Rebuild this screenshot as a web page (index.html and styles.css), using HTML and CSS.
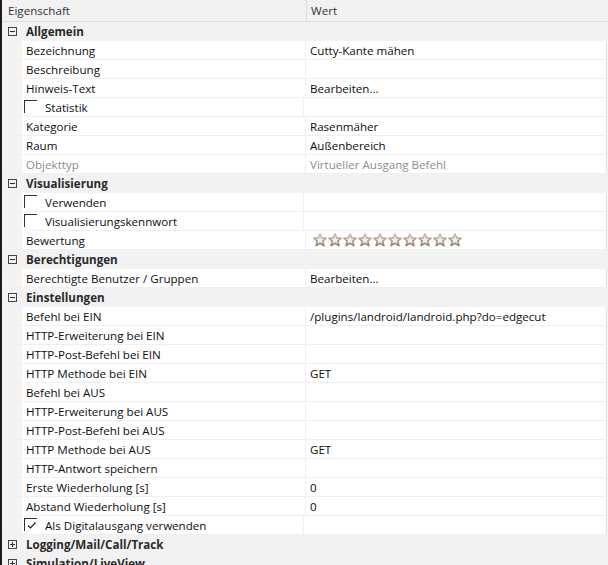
FILE: index.html
```html
<!DOCTYPE html>
<html lang="de">
<head>
<meta charset="utf-8">
<title>Eigenschaften</title>
<link rel="stylesheet" href="styles.css">
</head>
<body>
<div class="frame">
  <div class="head">
    <div class="hcell hname">Eigenschaft</div>
    <div class="hcell hval">Wert</div>
  </div>

  <div class="sec"><span class="tog minus"></span><span class="stitle">Allgemein</span></div>
  <div class="row"><div class="gut"></div><div class="name">Bezeichnung</div><div class="val">Cutty-Kante mähen</div></div>
  <div class="row"><div class="gut"></div><div class="name">Beschreibung</div><div class="val"></div></div>
  <div class="row"><div class="gut"></div><div class="name">Hinweis-Text</div><div class="val">Bearbeiten...</div></div>
  <div class="row"><div class="gut"></div><div class="name chk"><span class="box"></span>Statistik</div><div class="val"></div></div>
  <div class="row"><div class="gut"></div><div class="name">Kategorie</div><div class="val">Rasenmäher</div></div>
  <div class="row"><div class="gut"></div><div class="name">Raum</div><div class="val">Außenbereich</div></div>
  <div class="row dis"><div class="gut"></div><div class="name">Objekttyp</div><div class="val">Virtueller Ausgang Befehl</div></div>

  <div class="sec"><span class="tog minus"></span><span class="stitle">Visualisierung</span></div>
  <div class="row"><div class="gut"></div><div class="name chk"><span class="box"></span>Verwenden</div><div class="val"></div></div>
  <div class="row"><div class="gut"></div><div class="name chk"><span class="box"></span>Visualisierungskennwort</div><div class="val"></div></div>
  <div class="row"><div class="gut"></div><div class="name">Bewertung</div><div class="val stars">
    <svg width="150" height="14" viewBox="0 0 150 14">
      <defs>
        <linearGradient id="sg" x1="0" y1="0" x2="0" y2="1">
          <stop offset="0" stop-color="#cfc6b0"/>
          <stop offset="1" stop-color="#8c8270"/>
        </linearGradient>
        <polygon id="st" points="7,0.8 8.8,4.9 13.2,5.2 9.8,8.1 10.9,12.6 7,10.2 3.1,12.6 4.2,8.1 0.8,5.2 5.2,4.9" fill="#f2eee4" stroke="url(#sg)" stroke-width="1.6" stroke-linejoin="round"/>
      </defs>
      <use href="#st" x="0"/><use href="#st" x="15"/><use href="#st" x="30"/><use href="#st" x="45"/><use href="#st" x="60"/>
      <use href="#st" x="75"/><use href="#st" x="90"/><use href="#st" x="105"/><use href="#st" x="120"/><use href="#st" x="135"/>
    </svg>
  </div></div>

  <div class="sec"><span class="tog minus"></span><span class="stitle">Berechtigungen</span></div>
  <div class="row"><div class="gut"></div><div class="name">Berechtigte Benutzer / Gruppen</div><div class="val">Bearbeiten...</div></div>

  <div class="sec"><span class="tog minus"></span><span class="stitle">Einstellungen</span></div>
  <div class="row"><div class="gut"></div><div class="name">Befehl bei EIN</div><div class="val">/plugins/landroid/landroid.php?do=edgecut</div></div>
  <div class="row"><div class="gut"></div><div class="name">HTTP-Erweiterung bei EIN</div><div class="val"></div></div>
  <div class="row"><div class="gut"></div><div class="name">HTTP-Post-Befehl bei EIN</div><div class="val"></div></div>
  <div class="row"><div class="gut"></div><div class="name">HTTP Methode bei EIN</div><div class="val">GET</div></div>
  <div class="row"><div class="gut"></div><div class="name">Befehl bei AUS</div><div class="val"></div></div>
  <div class="row"><div class="gut"></div><div class="name">HTTP-Erweiterung bei AUS</div><div class="val"></div></div>
  <div class="row"><div class="gut"></div><div class="name">HTTP-Post-Befehl bei AUS</div><div class="val"></div></div>
  <div class="row"><div class="gut"></div><div class="name">HTTP Methode bei AUS</div><div class="val">GET</div></div>
  <div class="row"><div class="gut"></div><div class="name">HTTP-Antwort speichern</div><div class="val"></div></div>
  <div class="row"><div class="gut"></div><div class="name">Erste Wiederholung [s]</div><div class="val">0</div></div>
  <div class="row"><div class="gut"></div><div class="name">Abstand Wiederholung [s]</div><div class="val">0</div></div>
  <div class="row"><div class="gut"></div><div class="name chk"><span class="box checked"><svg width="11" height="11" viewBox="0 0 11 11"><path d="M2 5.5 L4.5 8 L9.5 2.5" fill="none" stroke="#222" stroke-width="1.2"/></svg></span>Als Digitalausgang verwenden</div><div class="val"></div></div>

  <div class="sec"><span class="tog plus"></span><span class="stitle">Logging/Mail/Call/Track</span></div>
  <div class="sec"><span class="tog plus"></span><span class="stitle">Simulation/LiveView</span></div>
</div>
</body>
</html>
```

FILE: styles.css
```css
html, body {
  margin: 0;
  padding: 0;
  background: #f3f3f3;
}
body {
  font-family: "Open Sans", "Noto Sans", "Liberation Sans", sans-serif;
  font-size: 11.6px;
  color: #0e0e0e;
  width: 608px;
  height: 565px;
  overflow: hidden;
}
.frame {
  border-left: 2px solid #1c1c1c;
  min-height: 565px;
  box-sizing: border-box;
}
.head {
  display: flex;
  height: 21px;
  border-bottom: 1px solid #dedede;
  background: #f2f2f2;
}
.hcell {
  line-height: 21px;
  color: #333;
}
.hname {
  width: 298px;
  padding-left: 6px;
  border-right: 1px solid #dcdcdc;
}
.hval {
  padding-left: 4px;
}
.sec {
  display: flex;
  align-items: center;
  height: 19px;
  background: #f2f2f2;
}
.tog {
  position: relative;
  width: 9px;
  height: 9px;
  box-sizing: border-box;
  border: 1px solid #444;
  margin-left: 6px;
  margin-right: 9px;
}
.tog::before {
  content: "";
  position: absolute;
  left: 1px;
  top: 3px;
  width: 5px;
  height: 1px;
  background: #333;
}
.tog.plus::after {
  content: "";
  position: absolute;
  left: 3px;
  top: 1px;
  width: 1px;
  height: 5px;
  background: #333;
}
.stitle {
  font-weight: bold;
  color: #2a2a2a;
}
.row {
  display: flex;
  height: 18px;
  border-bottom: 1px solid #f0f0f0;
  margin-right: 1px;
}
.gut {
  width: 20px;
  background: #f3f3f3;
  flex: none;
}
.name {
  width: 279px;
  padding-left: 4px;
  padding-top: 1px;
  background: #fff;
  border-right: 1px solid #f0f0f0;
  line-height: 17px;
  white-space: nowrap;
  overflow: hidden;
  flex: none;
}
.val {
  flex: 1;
  background: #fff;
  padding-left: 4px;
  padding-top: 1px;
  line-height: 17px;
  white-space: nowrap;
  overflow: hidden;
  border-right: 1px solid #e4e4e4;
}
.dis .name, .dis .val {
  color: #8d8d8d;
}
.chk {
  display: flex;
  align-items: flex-start;
  padding-left: 2px;
  padding-top: 1px;
  line-height: 17px;
}
.box {
  width: 13px;
  height: 13px;
  margin-top: 1px;
  box-sizing: border-box;
  border-top: 1px solid #333;
  border-left: 1px solid #333;
  margin-right: 8px;
  flex: none;
  display: flex;
  align-items: center;
  justify-content: center;
}
.stars {
  display: flex;
  align-items: center;
  padding-left: 7px;
  padding-top: 0;
}
.stars svg {
  display: block;
}
```
